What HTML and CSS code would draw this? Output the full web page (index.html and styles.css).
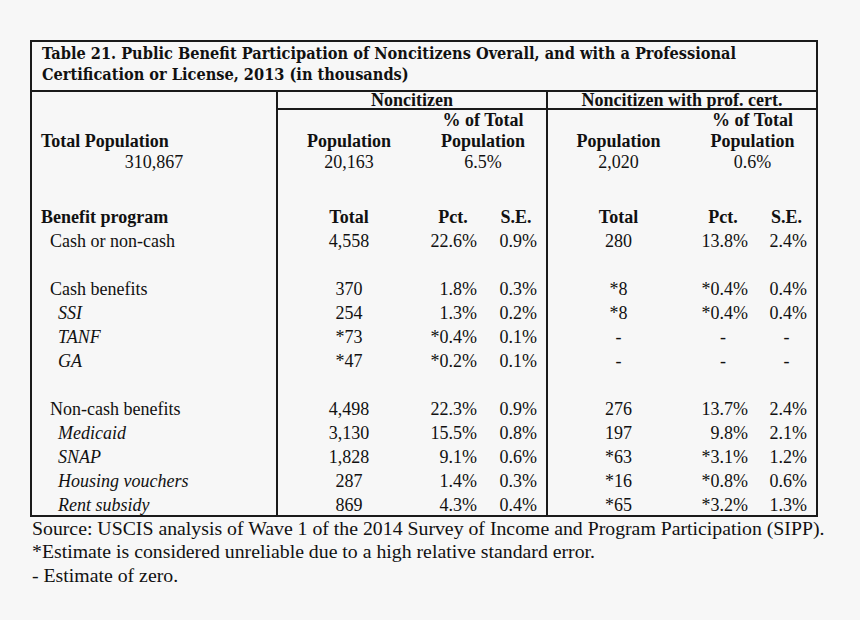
FILE: index.html
```html
<!DOCTYPE html>
<html>
<head>
<meta charset="utf-8">
<link rel="stylesheet" href="styles.css">
</head>
<body>
<div class="page">
<table class="t">
  <colgroup>
    <col class="c-label"><col class="c-tot"><col class="c-pct"><col class="c-se"><col class="c-tot2"><col class="c-pct2"><col class="c-se2">
  </colgroup>
  <tr class="r-title"><td colspan="7" class="title">Table 21. Public Benefit Participation of Noncitizens Overall, and with a Professional<br>Certification or License, 2013 (in thousands)</td></tr>
  <tr class="r-grp"><td class="lab vr"></td><th colspan="3" class="grp vr">Noncitizen</th><th colspan="3" class="grp">Noncitizen with prof. cert.</th></tr>
  <tr class="r-h"><td class="lab vr"></td><th></th><th colspan="2" class="vr">% of Total</th><th></th><th colspan="2">% of Total</th></tr>
  <tr class="r-h"><th class="lab left vr">Total Population</th><th>Population</th><th colspan="2" class="vr">Population</th><th>Population</th><th colspan="2">Population</th></tr>
  <tr class="r-h"><td class="lab ctr vr">310,867</td><td class="ctr">20,163</td><td colspan="2" class="ctr vr">6.5%</td><td class="ctr">2,020</td><td colspan="2" class="ctr">0.6%</td></tr>
  <tr class="r-gap"><td class="vr"></td><td></td><td></td><td class="vr"></td><td></td><td></td><td></td></tr>
  <tr><th class="lab left vr">Benefit program</th><th>Total</th><th>Pct.</th><th class="vr">S.E.</th><th>Total</th><th>Pct.</th><th>S.E.</th></tr>
  <tr><td class="lab i1 vr">Cash or non-cash</td><td class="ctr">4,558</td><td class="num">22.6%</td><td class="num vr">0.9%</td><td class="ctr">280</td><td class="num">13.8%</td><td class="num">2.4%</td></tr>
  <tr><td class="vr"></td><td></td><td></td><td class="vr"></td><td></td><td></td><td></td></tr>
  <tr><td class="lab i1 vr">Cash benefits</td><td class="ctr">370</td><td class="num">1.8%</td><td class="num vr">0.3%</td><td class="ctr">*8</td><td class="num">*0.4%</td><td class="num">0.4%</td></tr>
  <tr><td class="lab i2 vr">SSI</td><td class="ctr">254</td><td class="num">1.3%</td><td class="num vr">0.2%</td><td class="ctr">*8</td><td class="num">*0.4%</td><td class="num">0.4%</td></tr>
  <tr><td class="lab i2 vr">TANF</td><td class="ctr">*73</td><td class="num">*0.4%</td><td class="num vr">0.1%</td><td class="ctr">-</td><td class="ctr">-</td><td class="ctr">-</td></tr>
  <tr><td class="lab i2 vr">GA</td><td class="ctr">*47</td><td class="num">*0.2%</td><td class="num vr">0.1%</td><td class="ctr">-</td><td class="ctr">-</td><td class="ctr">-</td></tr>
  <tr><td class="vr"></td><td></td><td></td><td class="vr"></td><td></td><td></td><td></td></tr>
  <tr><td class="lab i1 vr">Non-cash benefits</td><td class="ctr">4,498</td><td class="num">22.3%</td><td class="num vr">0.9%</td><td class="ctr">276</td><td class="num">13.7%</td><td class="num">2.4%</td></tr>
  <tr><td class="lab i2 vr">Medicaid</td><td class="ctr">3,130</td><td class="num">15.5%</td><td class="num vr">0.8%</td><td class="ctr">197</td><td class="num">9.8%</td><td class="num">2.1%</td></tr>
  <tr><td class="lab i2 vr">SNAP</td><td class="ctr">1,828</td><td class="num">9.1%</td><td class="num vr">0.6%</td><td class="ctr">*63</td><td class="num">*3.1%</td><td class="num">1.2%</td></tr>
  <tr><td class="lab i2 vr">Housing vouchers</td><td class="ctr">287</td><td class="num">1.4%</td><td class="num vr">0.3%</td><td class="ctr">*16</td><td class="num">*0.8%</td><td class="num">0.6%</td></tr>
  <tr class="r-last"><td class="lab i2 vr">Rent subsidy</td><td class="ctr">869</td><td class="num">4.3%</td><td class="num vr">0.4%</td><td class="ctr">*65</td><td class="num">*3.2%</td><td class="num">1.3%</td></tr>
</table>
<div class="notes">
  <p>Source: USCIS analysis of Wave 1 of the 2014 Survey of Income and Program Participation (SIPP).</p>
  <p>*Estimate is considered unreliable due to a high relative standard error.</p>
  <p>- Estimate of zero.</p>
</div>
</div>
</body>
</html>
```

FILE: styles.css
```css
html, body {
  margin: 0;
  padding: 0;
  background: #f7f7f7;
}
.page {
  padding: 40px 0 0 30px;
  color: #111;
  font-family: "Liberation Serif", "Times New Roman", serif;
}
.t {
  border-collapse: collapse;
  table-layout: fixed;
  width: 788px;
  border: 2px solid #1a1a1a;
  font-size: 18px;
}
.c-label { width: 246px; }
.c-tot { width: 143px; }
.c-pct { width: 66px; }
.c-se { width: 61px; }
.c-tot2 { width: 142px; }
.c-pct2 { width: 68px; }
.c-se2 { width: 60px; }

.t td, .t th {
  padding: 0;
  line-height: 21px;
  height: 24px;
  vertical-align: top;
  text-align: center;
  white-space: nowrap;
  font-weight: normal;
}
.t th { font-weight: bold; }
.t .title {
  font-family: "DejaVu Serif Condensed", "DejaVu Serif", serif;
  font-stretch: condensed;
  font-weight: bold;
  font-size: 16.2px;
  line-height: 21px;
  text-align: left;
  padding: 1px 10px 5px 10px;
  border-bottom: 2px solid #1a1a1a;
  height: auto;
}
.t .r-grp td, .t .r-grp th {
  height: 16px;
  line-height: 16px;
}
.grp {
  border-bottom: 2px solid #1a1a1a;
}
.t .r-h td, .t .r-h th {
  height: 21px;
}
.t .r-gap td {
  height: 34px;
}
.t .r-last td {
  height: 20px;
  line-height: 20px;
}
.vr { border-right: 2px solid #1a1a1a; }
.t .left { text-align: left; padding-left: 9px; }
.t .ctr { text-align: center; }
.t .num { text-align: right; padding-right: 9px; }
.t .i1 { text-align: left; padding-left: 18px; }
.t .i2 { text-align: left; padding-left: 26px; font-style: italic; }
.t .lab.ctr { text-align: center; }

.notes {
  font-size: 19.8px;
  line-height: 23.4px;
  padding-left: 2px;
}
.notes p { margin: 0; }
```
